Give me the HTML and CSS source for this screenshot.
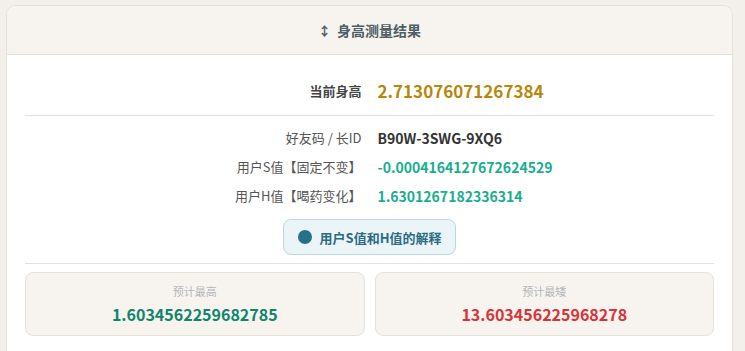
FILE: index.html
```html
<!DOCTYPE html>
<html lang="zh-CN">
<head>
    <meta charset="UTF-8">
    <meta name="viewport" content="width=device-width, initial-scale=1.0">
    <title>身高测量结果</title>
    <link rel="stylesheet" href="styles.css">
</head>
<body>

<div class="card">
    <div class="card-header">
        <span class="arrow">↕</span> 身高测量结果
    </div>
    <div class="card-body">
        <div class="row main-row">
            <span class="label main-label">当前身高</span>
            <span class="value height">2.713076071267384</span>
        </div>
        <hr class="divider">
        <div class="row">
            <span class="label">好友码 / 长ID</span>
            <span class="value code">B90W-3SWG-9XQ6</span>
        </div>
        <div class="row">
            <span class="label">用户S值【固定不变】</span>
            <span class="value teal">-0.0004164127672624529</span>
        </div>
        <div class="row">
            <span class="label">用户H值【喝药变化】</span>
            <span class="value teal">1.6301267182336314</span>
        </div>
        <div class="btn-wrap">
            <button class="explain-btn"><span class="dot"></span>用户S值和H值的解释</button>
        </div>
        <hr class="divider lower">
        <div class="predict">
            <div class="predict-box">
                <div class="predict-label">预计最高</div>
                <div class="predict-value green">1.6034562259682785</div>
            </div>
            <div class="predict-box">
                <div class="predict-label">预计最矮</div>
                <div class="predict-value red">13.603456225968278</div>
            </div>
        </div>
    </div>
</div>

</body>
</html>
```

FILE: styles.css
```css
body {
    margin: 0;
    padding: 5px 12px 0 6px;
    background-color: #f3f0eb;
    font-family: "Noto Sans CJK SC", "Noto Sans", sans-serif;
    height: 351px;
    box-sizing: border-box;
    overflow: hidden;
}
.card {
    background-color: #fff;
    border: 1px solid #e6e1d8;
    border-radius: 10px;
    overflow: hidden;
    height: 400px;
}
.card-header {
    background-color: #f7f4ef;
    border-bottom: 1px solid #e6e1d8;
    height: 48px;
    display: flex;
    align-items: center;
    justify-content: center;
    font-size: 14px;
    font-weight: bold;
    color: #4f5d66;
}
.arrow {
    margin-right: 6px;
    font-size: 13px;
}
.card-body {
    padding: 17px 18px 0 18px;
}
.row {
    display: grid;
    grid-template-columns: 1fr 1fr;
    column-gap: 16px;
    align-items: center;
    height: 29px;
}
.main-row {
    height: 36px;
}
.label {
    text-align: right;
    font-size: 13px;
    color: #555;
}
.main-label {
    font-weight: bold;
    color: #444;
}
.value {
    font-size: 14px;
    font-weight: bold;
}
.height {
    font-size: 17px;
    color: #b8860b;
}
.code {
    color: #333;
}
.teal {
    color: #18ae8e;
}
.divider {
    border: none;
    border-top: 1px solid #e6e1d8;
    margin: 7px 0 7px 0;
}
.divider.lower {
    margin: 8px 0 8px 0;
}
.btn-wrap {
    display: flex;
    justify-content: center;
    padding: 9px 0 0 0;
}
.explain-btn {
    display: flex;
    align-items: center;
    gap: 8px;
    height: 36px;
    padding: 0 14px;
    background-color: #ebf5f8;
    border: 1px solid #bad8e1;
    border-radius: 8px;
    font-family: inherit;
    font-size: 13px;
    font-weight: bold;
    color: #2b6c82;
    cursor: pointer;
}
.dot {
    width: 14px;
    height: 14px;
    border-radius: 50%;
    background-color: #25718b;
}
.predict {
    display: grid;
    grid-template-columns: 1fr 1fr;
    gap: 10px;
}
.predict-box {
    background-color: #f7f4ef;
    border: 1px solid #e6e1d8;
    border-radius: 8px;
    height: 64px;
    box-sizing: border-box;
    display: flex;
    flex-direction: column;
    align-items: center;
    justify-content: center;
}
.predict-label {
    font-size: 11px;
    color: #b3b6b8;
}
.predict-value {
    font-size: 16px;
    font-weight: bold;
    margin-top: 3px;
}
.green {
    color: #11856b;
}
.red {
    color: #d8333a;
}
```
